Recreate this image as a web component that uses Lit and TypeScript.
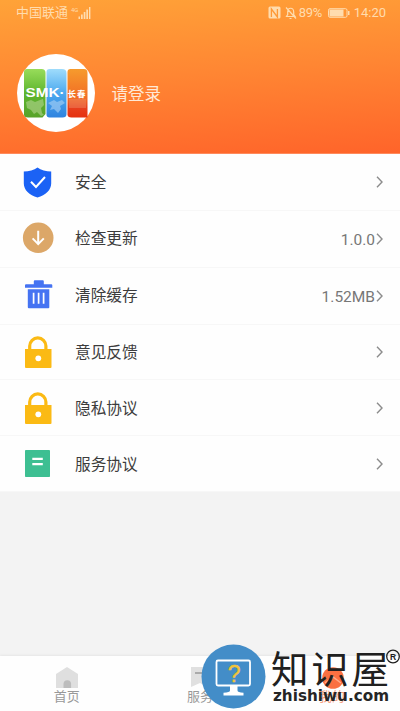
import { LitElement, html, css, svg } from "lit";
import { customElement } from "lit/decorators.js";

const lock = svg`
  <path d="M6.700 13.500V10a8.100 8.100 0 0 1 16.200 0v3.500" fill="none" stroke="#fbba14" stroke-width="3.200"/>
  <path d="M2 13h26.500V31q0 1-1 1H3q-1 0-1-1z" fill="#fbba14"/>
  <circle cx="15.300" cy="22.300" r="2.900" fill="#fff"/>`;

const icons = {
  shield: svg`
    <path d="M14.500 1.500c3.500 2.600 8.500 4 13.700 4v12c0 6.500-5.500 11.500-13.700 14C6.300 29 .8 24 .8 17.500v-12c5.200 0 10.200-1.400 13.700-4z" fill="#1b62f5"/>
    <path d="M8 15.700l5 5.300 9-10" fill="none" stroke="#fff" stroke-width="2"/>`,
  update: svg`
    <circle cx="15.200" cy="14.700" r="15.300" fill="#dca768"/>
    <path d="M15.200 7.700v13.200M9.600 15.400l5.600 5.700 5.600-5.700" fill="none" stroke="#fff" stroke-width="2"/>`,
  trash: svg`
    <g transform="translate(.8 -1.800)">
      <path d="M11 2h8q1 0 1 1v3h7.500q1 0 1 1v2.500H1.200V7q0-1 1-1H10V3q0-1 1-1z" fill="#4573f2"/>
      <path d="M4 11h21.500v18q0 1-1 1H5q-1 0-1-1z" fill="#4573f2"/>
      <path d="M9.800 14.500v11M14.800 14.500v11M19.800 14.500v11" stroke="#fff" stroke-width="1.700"/>
    </g>`,
  lock,
  doc: svg`
    <rect x="2" y="2" width="25" height="27" rx=".8" fill="#3dbf92"/>
    <path d="M9.300 10.800h10.500M9.300 16.200h10.500" stroke="#fff" stroke-width="2.300"/>`,
};

const rows: { icon: keyof typeof icons; label: string; value?: string }[] = [
  { icon: "shield", label: "安全" },
  { icon: "update", label: "检查更新", value: "1.0.0" },
  { icon: "trash", label: "清除缓存", value: "1.52MB" },
  { icon: "lock", label: "意见反馈" },
  { icon: "lock", label: "隐私协议" },
  { icon: "doc", label: "服务协议" },
];

@customElement("app-root")
export class AppRoot extends LitElement {
  static styles = css`
    :host {
      display: flex; flex-direction: column; position: relative;
      width: 400px; height: 711px; overflow: hidden; background: #f3f3f3;
      font-family: Roboto, "Noto Sans CJK SC", sans-serif; color: #444;
    }
    svg { display: block; overflow: visible; }
    .top {
      flex: none; height: 154px; box-sizing: border-box;
      background: linear-gradient(176deg, #ffa338 0%, #ff8633 48%, #ff642a 100%);
      border-bottom: 1px solid #ff8a5c;
    }
    .status {
      height: 26px; display: flex; align-items: center; padding: 0 14px 0 16px;
      color: #ffdcae; font-size: 13px; line-height: 26px; box-sizing: border-box;
    }
    .signal { margin-left: 3px; }
    .right { margin-left: auto; display: flex; align-items: center; }
    .pct { margin-left: 2px; width: 25px; white-space: nowrap; letter-spacing: -0.200px; }
    .batt { margin-left: 4px; }
    .time { margin-left: 4px; }
    .user { display: flex; align-items: center; padding: 27.500px 0 0 16.500px; }
    .avatar { width: 78px; height: 78px; }
    .login { margin-left: 17px; padding-top: 4px; color: #ffe9d6; font-size: 16.500px; line-height: 24px; }
    .list { background: #fefefe; flex: none; height: 338px; display: grid; grid-template-rows: 56.500px 57px 57px 55.500px 56px 56px; }
    .row {
      display: flex; align-items: center; padding: 0 17px 0 23px;
      border-bottom: 1px solid #f7f7f7; box-sizing: border-box;
    }
    .row svg { flex: none; }
    .label { margin-left: 22px; padding-top: 3px; font-size: 15.700px; color: #3c3c3c; line-height: 24px; }
    .row:nth-child(2) .label, .row:nth-child(3) .label { padding-top: 0; }
    .value { margin-left: auto; font-size: 15.500px; color: #777; padding-top: 3px; }
    .arrow { margin-left: auto; }
    .value + .arrow { margin-left: 1px; }
    .tabs {
      margin-top: auto; height: 55px; flex: none; background: #fefefe;
      display: grid; grid-template-columns: repeat(3, 133.300px);
      box-shadow: 0 -1px 2px #e6e6e6;
    }
    .tab { display: flex; flex-direction: column; align-items: center; padding-top: 10px; font-size: 13px; line-height: 16px; color: #999; }
    .tab.on { color: #f6a184; }
    .tab.on span { margin-right: 3px; }
    .mark { position: absolute; left: 195px; top: 638px; }
  `;

  render() {
    return html`
      <header class="top">
        <div class="status">
          <span>中国联通</span>
          <svg class="signal" width="22" height="14" viewBox="0 0 22 14" fill="#ffdcae">
            <text x="0" y="5.500" font-size="6">4G</text>
            <path d="M7.500 10.500h1.500v2.500h-1.500zM10 8.500h1.700v4.500H10zM12.700 6h1.700v7h-1.700zM15.300 3.500h1.700V13h-1.700zM18 1h1.400v12H18z"/>
          </svg>
          <div class="right">
            <svg width="29" height="14" viewBox="0 0 29 14" fill="none" stroke="#ffdcae">
              <rect x=".5" y=".5" width="12" height="12" rx="1.500" fill="#ffdcae" stroke="none"/>
              <path d="M3.400 11V3l6 8V3" stroke="#ff9936" stroke-width="1.300"/>
              <path d="M18.500 10.500h8.500l-1.300-2V6c0-5-6-5-6 0v2.500zM21.500 12.500h2M18 1.500l10 11" stroke-width="1.200"/>
            </svg>
            <span class="pct">89%</span>
            <svg class="batt" width="22" height="10" viewBox="0 0 22 10" fill="#ffdcae">
              <rect x=".5" y=".7" width="18.500" height="8.600" rx="1.500" fill="none" stroke="#ffdcae"/>
              <path d="M1.500 1.500h14v7h-14zM20 3h1.500v4H20z"/>
            </svg>
            <span class="time">14:20</span>
          </div>
        </div>
        <div class="user">
          <svg class="avatar" viewBox="0 0 78 78">
            <defs>
              <linearGradient id="g" x2="0" y2="1"><stop stop-color="#98dc5a"/><stop offset=".5" stop-color="#5eb52e"/><stop offset="1" stop-color="#58a32a"/></linearGradient>
              <linearGradient id="b" x2="0" y2="1"><stop stop-color="#9fdcfb"/><stop offset=".5" stop-color="#4ca9ef"/><stop offset="1" stop-color="#2e83df"/></linearGradient>
              <linearGradient id="o" x2="0" y2="1"><stop stop-color="#f69b2d"/><stop offset=".62" stop-color="#f26a24"/><stop offset=".8" stop-color="#e83f1c"/><stop offset="1" stop-color="#e5300f"/></linearGradient>
            </defs>
            <circle cx="39" cy="39" r="39" fill="#fff"/>
            <path d="M10 15h14.500q4 0 4 4v41l-3 3.500H11q-4 0-4-3V18q0-3 3-3z" fill="url(#g)"/>
            <path d="M32.500 15H45q4.500 0 4.500 4v41q0 3.500-4 3.500h-13q-3 0-3-3V18q0-3 3-3z" fill="url(#b)"/>
            <path d="M53.500 15H67q3.500 0 3.500 4v44.500h-16q-4 0-4-3V18q0-3 3-3z" fill="url(#o)"/>
            <path d="M9 48l5-2 4 2 5-2 3-1 1 6-3 3 1 5 2 2-3 1-4-4-3 2-3-4-4-2z" fill="#a6cf82" opacity=".7"/>
            <path d="M31 49l6-3 3 2 5-2 3 3-5 3 1 3-3 4-4-4-4 1 2-4z" fill="#a3cef4" opacity=".65"/>
            <path d="M52 45h17v9H52z" fill="#ed8b68" opacity=".45"/>
            <text x="8.600" y="43.200" fill="#fff" font-family="Liberation Sans, sans-serif" font-weight="700" font-size="12" textLength="39" lengthAdjust="spacingAndGlyphs">SMK·</text>
            <text x="50.500" y="42.500" fill="#fff" font-family="Noto Sans CJK SC, sans-serif" font-weight="700" font-size="8.500" textLength="18">长春</text>
          </svg>
          <span class="login">请登录</span>
        </div>
      </header>
      <main class="list">
        ${rows.map((r) => html`
          <div class="row">
            <svg width="30" height="32" viewBox="0 0 30 32">${icons[r.icon]}</svg>
            <span class="label">${r.label}</span>
            ${r.value ? html`<span class="value">${r.value}</span>` : ""}
            <svg class="arrow" width="7" height="12" viewBox="0 0 7 12"><path d="M1 .8l5 5.200-5 5.200" fill="none" stroke="#8c8c8c" stroke-width="1.400"/></svg>
          </div>`)}
      </main>
      <nav class="tabs">
        <div class="tab">
          <svg width="24" height="23" viewBox="0 0 24 23"><path d="M1 8L12 1l11 7v14H1z" fill="#dfdfdf"/><path d="M8.500 22v-4a3.800 3.800 0 0 1 7.600 0v4z" fill="#bdbdbd"/></svg>
          <span>首页</span>
        </div>
        <div class="tab">
          <svg width="24" height="23" viewBox="0 0 24 23"><path d="M3 1h18v21l-9-5-9 4z" fill="#e0e0e0"/><path d="M7 7h10" stroke="#aaa" stroke-width="2"/></svg>
          <span>服务</span>
        </div>
        <div class="tab on">
          <svg width="24" height="23" viewBox="0 0 24 23"><circle cx="12" cy="12" r="10.800" fill="#fa7042"/><path d="M4 17l8-6 8 6" fill="none" stroke="#ffab88" stroke-width="1.500"/></svg>
          <span>我的</span>
        </div>
      </nav>
      <svg class="mark" width="205" height="73" viewBox="195 638 205 73">
        <circle cx="233.500" cy="676.500" r="32" fill="#438dc8"/>
        <rect x="216.500" y="660.500" width="33.500" height="25" rx="1.500" fill="none" stroke="#fff" stroke-width="1.800"/>
        <path d="M230 686h7.500v4.500q0 2 6 2.300v2.700h-20v-2.700q6.500-.3 6.500-2.300z" fill="#fff"/>
        <text x="227.700" y="682" font-family="Liberation Sans, sans-serif" font-size="23" fill="#f1c43a" stroke="#f1c43a" stroke-width=".4">?</text>
        <text x="271" y="683" font-family="Noto Sans CJK SC, sans-serif" font-size="37.500" fill="#202020" textLength="118">知识屋</text>
        <text x="273" y="701" font-family="DejaVu Sans, sans-serif" font-weight="700" font-size="15.500" fill="#252525" textLength="116" lengthAdjust="spacingAndGlyphs">zhishiwu.com</text>
        <circle cx="393" cy="656.500" r="6.300" fill="none" stroke="#202020" stroke-width="1.300"/>
        <text x="389.900" y="659.600" font-family="Liberation Sans, sans-serif" font-weight="700" font-size="8.500" fill="#202020">R</text>
      </svg>`;
  }
}
